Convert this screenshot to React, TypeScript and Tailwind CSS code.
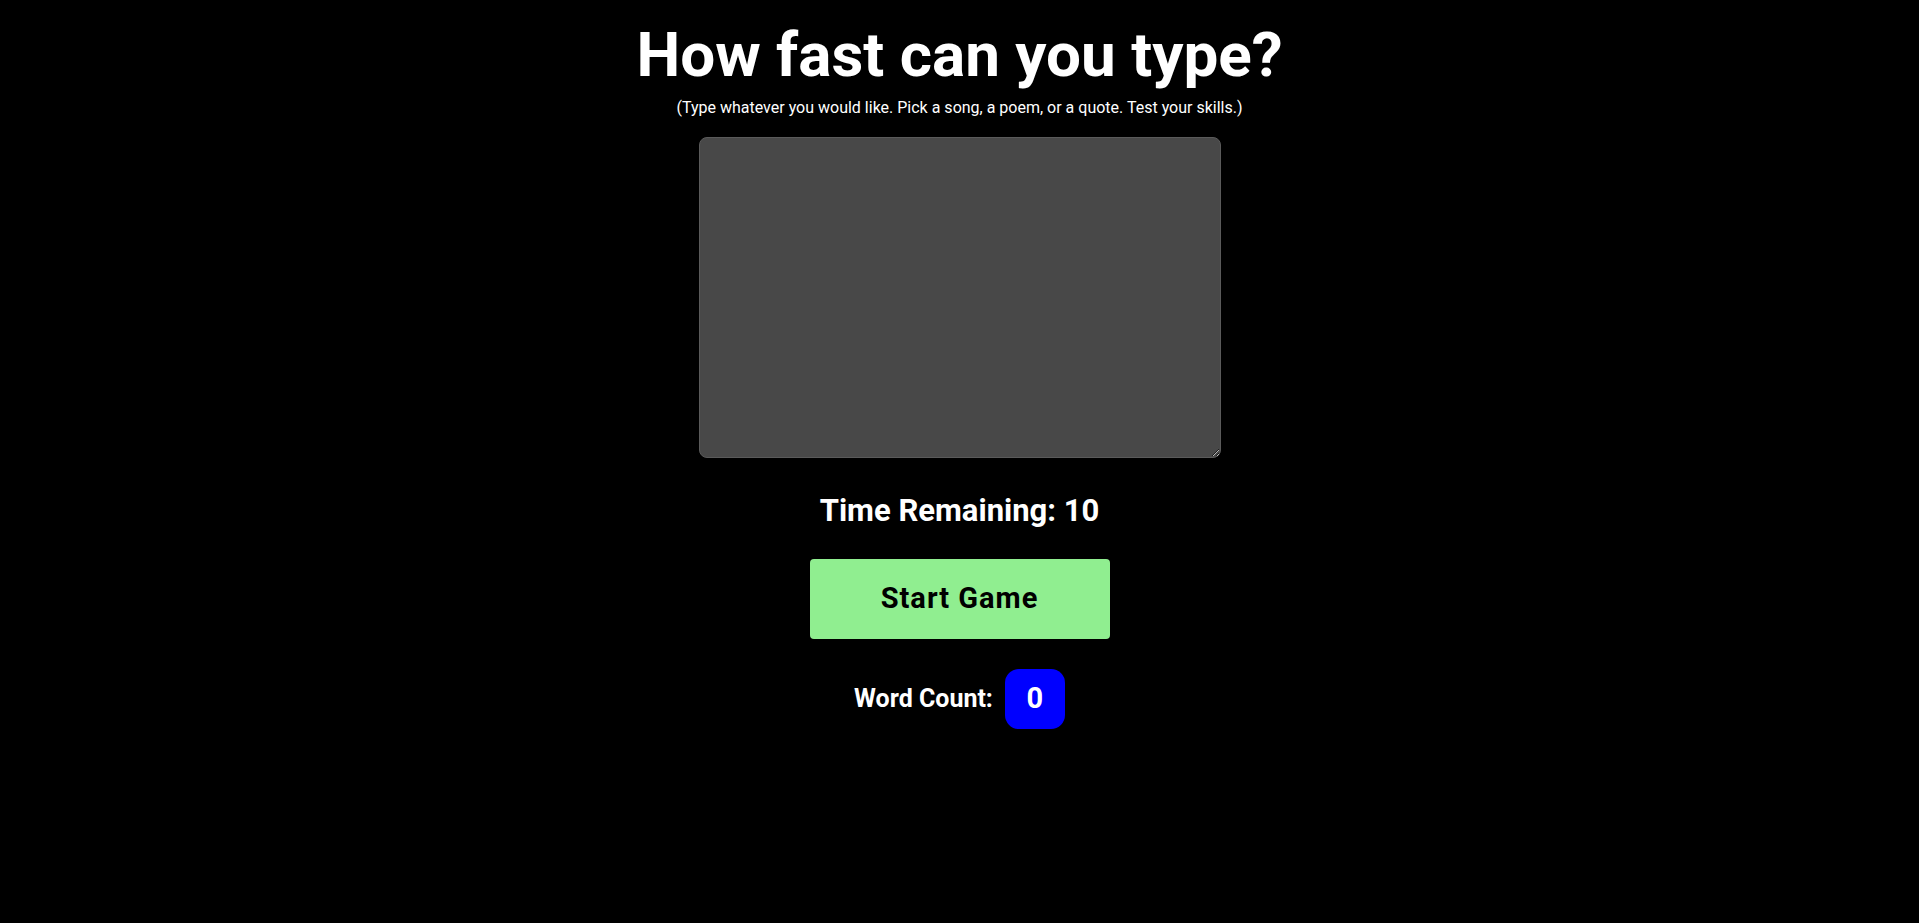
import { useState } from 'react';

export default function App() {
  const [text, setText] = useState('');
  const [timeLeft] = useState(10);

  const wordCount = text.trim() === '' ? 0 : text.trim().split(/\s+/).length;

  return (
    <div className="flex min-h-screen w-full flex-col items-center bg-black pt-6 font-['Roboto',sans-serif] text-white">
      <h1 className="text-[62px] font-bold leading-none">How fast can you type?</h1>
      <p className="mt-[10px] text-[16px] leading-6">
        (Type whatever you would like. Pick a song, a poem, or a quote. Test your skills.)
      </p>

      <textarea
        value={text}
        onChange={(e) => setText(e.target.value)}
        className="mt-[17px] block h-[321px] w-[522px] rounded-lg border border-[#5a5a5a] bg-[#484848] p-2 text-white outline-none"
      />

      <h2 className="mt-[37px] text-[31px] font-bold leading-none">Time Remaining: {timeLeft}</h2>

      <button className="mt-[33px] h-[80px] w-[300px] rounded bg-[#90ee90] text-[29px] font-bold tracking-[1px] text-black">
        Start Game
      </button>

      <div className="mt-[30px] flex items-center gap-3">
        <span className="text-[25px] font-bold">Word Count:</span>
        <div className="flex h-[60px] w-[60px] items-center justify-center rounded-[14px] bg-[#0000ff] text-[29px] font-bold">
          {wordCount}
        </div>
      </div>
    </div>
  );
}
